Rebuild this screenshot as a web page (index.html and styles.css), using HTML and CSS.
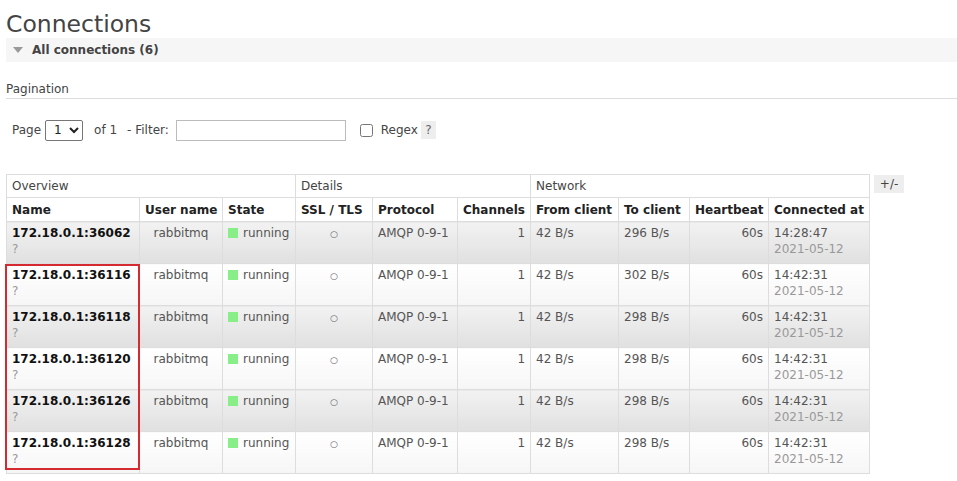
FILE: index.html
```html
<!DOCTYPE html>
<html>
<head>
<meta charset="utf-8">
<link rel="stylesheet" href="styles.css">
</head>
<body>
<div class="page">
  <h1 class="title">Connections</h1>
  <div class="section-bar"><span class="tri"></span><span class="section-title">All connections (6)</span></div>
  <div class="pagination-head">Pagination</div>
  <div class="controls">
    <span class="lbl">Page</span>
    <select class="sel"><option>1</option></select>
    <span class="lbl of">of 1</span>
    <span class="lbl">- Filter:</span>
    <input class="filter" type="text">
    <input class="chk" type="checkbox">
    <span class="lbl">Regex</span>
    <span class="help">?</span>
  </div>
  <div class="table-row">
    <div class="table-wrap">
      <table class="list">
        <colgroup>
          <col class="c1"><col class="c2"><col class="c3"><col class="c4"><col class="c5"><col class="c6"><col class="c7"><col class="c8"><col class="c9"><col class="c10">
        </colgroup>
        <thead>
          <tr class="group">
            <th colspan="3">Overview</th>
            <th colspan="3">Details</th>
            <th colspan="4">Network</th>
          </tr>
          <tr class="heads">
            <th>Name</th><th>User name</th><th>State</th><th>SSL / TLS</th><th>Protocol</th><th>Channels</th><th>From client</th><th>To client</th><th>Heartbeat</th><th>Connected at</th>
          </tr>
        </thead>
        <tbody>
          <tr class="alt1">
            <td><span class="name">172.18.0.1:36062</span><br><span class="q">?</span></td>
            <td class="c">rabbitmq</td>
            <td><span class="sq"></span>running</td>
            <td class="c"><span class="circ">○</span></td>
            <td>AMQP 0-9-1</td>
            <td class="r">1</td>
            <td>42 B/s</td>
            <td>296 B/s</td>
            <td class="r">60s</td>
            <td>14:28:47<br><span class="q">2021-05-12</span></td>
          </tr>
          <tr class="alt2">
            <td><span class="name">172.18.0.1:36116</span><br><span class="q">?</span></td>
            <td class="c">rabbitmq</td>
            <td><span class="sq"></span>running</td>
            <td class="c"><span class="circ">○</span></td>
            <td>AMQP 0-9-1</td>
            <td class="r">1</td>
            <td>42 B/s</td>
            <td>302 B/s</td>
            <td class="r">60s</td>
            <td>14:42:31<br><span class="q">2021-05-12</span></td>
          </tr>
          <tr class="alt1">
            <td><span class="name">172.18.0.1:36118</span><br><span class="q">?</span></td>
            <td class="c">rabbitmq</td>
            <td><span class="sq"></span>running</td>
            <td class="c"><span class="circ">○</span></td>
            <td>AMQP 0-9-1</td>
            <td class="r">1</td>
            <td>42 B/s</td>
            <td>298 B/s</td>
            <td class="r">60s</td>
            <td>14:42:31<br><span class="q">2021-05-12</span></td>
          </tr>
          <tr class="alt2">
            <td><span class="name">172.18.0.1:36120</span><br><span class="q">?</span></td>
            <td class="c">rabbitmq</td>
            <td><span class="sq"></span>running</td>
            <td class="c"><span class="circ">○</span></td>
            <td>AMQP 0-9-1</td>
            <td class="r">1</td>
            <td>42 B/s</td>
            <td>298 B/s</td>
            <td class="r">60s</td>
            <td>14:42:31<br><span class="q">2021-05-12</span></td>
          </tr>
          <tr class="alt1">
            <td><span class="name">172.18.0.1:36126</span><br><span class="q">?</span></td>
            <td class="c">rabbitmq</td>
            <td><span class="sq"></span>running</td>
            <td class="c"><span class="circ">○</span></td>
            <td>AMQP 0-9-1</td>
            <td class="r">1</td>
            <td>42 B/s</td>
            <td>298 B/s</td>
            <td class="r">60s</td>
            <td>14:42:31<br><span class="q">2021-05-12</span></td>
          </tr>
          <tr class="alt2">
            <td><span class="name">172.18.0.1:36128</span><br><span class="q">?</span></td>
            <td class="c">rabbitmq</td>
            <td><span class="sq"></span>running</td>
            <td class="c"><span class="circ">○</span></td>
            <td>AMQP 0-9-1</td>
            <td class="r">1</td>
            <td>42 B/s</td>
            <td>298 B/s</td>
            <td class="r">60s</td>
            <td>14:42:31<br><span class="q">2021-05-12</span></td>
          </tr>
        </tbody>
      </table>
      <div class="highlight"></div>
    </div>
    <span class="plusminus">+/-</span>
  </div>
</div>
</body>
</html>
```
FILE: styles.css
```css
html, body {
  margin: 0;
  padding: 0;
  background: #fff;
}
body {
  font-family: "DejaVu Sans", Verdana, sans-serif;
  font-size: 12px;
  color: #444;
}
.page {
  padding-left: 6px;
}
.title {
  margin: 10px 0 0 0;
  font-size: 23.5px;
  line-height: 28px;
  font-weight: normal;
  color: #444;
}
.section-bar {
  margin-top: 0;
  height: 24px;
  background: #f6f6f6;
  display: flex;
  align-items: center;
}
.tri {
  width: 0;
  height: 0;
  border-left: 5px solid transparent;
  border-right: 5px solid transparent;
  border-top: 6px solid #999;
  margin-left: 7px;
  margin-right: 9px;
}
.section-title {
  font-weight: bold;
  font-size: 12px;
  color: #444;
}
.pagination-head {
  margin-top: 20px;
  padding-bottom: 1px;
  line-height: 15px;
  border-bottom: 1px solid #ddd;
  color: #444;
}
.controls {
  margin-top: 20px;
  display: flex;
  align-items: center;
  height: 22px;
  padding-left: 6px;
}
.lbl {
  color: #444;
}
.sel {
  margin: 0 11px 0 4px;
  width: 38px;
  height: 21px;
  font-family: "DejaVu Sans", Verdana, sans-serif;
  font-size: 12px;
  color: #222;
  border: 1px solid #767676;
  border-radius: 2px;
  background: #fff;
  padding: 0 0 0 4px;
}
.of {
  margin-right: 10px;
}
.filter {
  margin: 0 0 0 7px;
  width: 170px;
  height: 21px;
  box-sizing: border-box;
  border: 1px solid #bbb;
  padding: 0;
}
.chk {
  margin: 0 8px 0 14px;
  width: 13px;
  height: 13px;
}
.help {
  margin-left: 3px;
  background: #eee;
  width: 15px;
  height: 18px;
  display: inline-flex;
  align-items: center;
  justify-content: center;
  color: #666;
}
.table-row {
  margin-top: 33px;
  display: flex;
  align-items: flex-start;
}
.table-wrap {
  position: relative;
}
table.list {
  border-collapse: collapse;
  table-layout: fixed;
  width: 863px;
}
col.c1 { width: 133px; }
col.c2 { width: 83px; }
col.c3 { width: 73px; }
col.c4 { width: 77px; }
col.c5 { width: 85px; }
col.c6 { width: 73px; }
col.c7 { width: 88px; }
col.c8 { width: 71px; }
col.c9 { width: 79px; }
col.c10 { width: 101px; }
table.list th, table.list td {
  border: 1px solid #ddd;
  padding: 0 5px;
  text-align: left;
  white-space: nowrap;
  overflow: hidden;
}
tr.group th {
  font-weight: normal;
  color: #444;
  height: 23px;
  box-sizing: border-box;
  background: #fff;
}
tr.heads th {
  font-weight: bold;
  color: #222;
  height: 24px;
  box-sizing: border-box;
  background: #fff;
}
table.list td {
  vertical-align: top;
  height: 42px;
  box-sizing: border-box;
  padding-top: 3px;
  line-height: 16px;
  color: #555;
}
tr.alt1 td {
  background: linear-gradient(#f2f2f2, #e0e0e0);
}
tr.alt2 td {
  background: linear-gradient(#fff, #f6f6f6);
}
td.c { text-align: center !important; }
td.r { text-align: right !important; }
.name {
  font-weight: bold;
  color: #111;
}
.q {
  color: #999;
}
.sq {
  display: inline-block;
  width: 10px;
  height: 10px;
  background: #88ee88;
  margin-right: 5px;
  vertical-align: -1px;
}
.circ {
  font-size: 9px;
  color: #666;
}
.highlight {
  position: absolute;
  left: -1px;
  top: 90px;
  width: 135px;
  height: 206px;
  box-sizing: border-box;
  border: 2px solid #d42a32;
  pointer-events: none;
}
.plusminus {
  margin-left: 4px;
  margin-top: 1px;
  background: #eee;
  color: #444;
  width: 30px;
  height: 18px;
  display: inline-flex;
  align-items: center;
  justify-content: center;
}
```
